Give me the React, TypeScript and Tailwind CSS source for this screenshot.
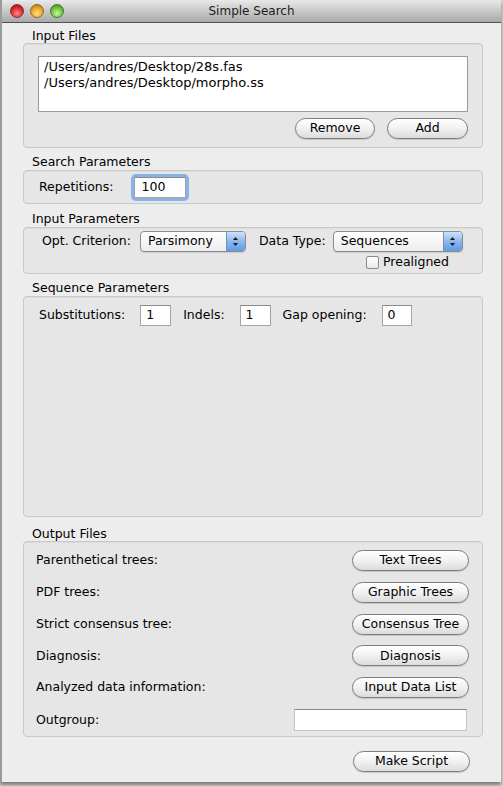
import React from "react";

const FONT = { fontFamily: '"DejaVu Sans", "Liberation Sans", sans-serif' };

function AquaButton({ label, className }: { label: string; className: string }) {
  return (
    <button
      type="button"
      className={`flex h-[21px] items-center justify-center rounded-full border border-[#7d7d7d] bg-gradient-to-b from-[#ffffff] via-[#f1f1f1] to-[#dcdcdc] text-[12.5px] text-black shadow-[0_1px_1px_rgba(0,0,0,0.15)] ${className}`}
    >
      {label}
    </button>
  );
}

function PopUp({ value, className }: { value: string; className: string }) {
  return (
    <div
      className={`flex h-[21px] items-stretch overflow-hidden rounded-[4px] border border-[#8c8c8c] bg-gradient-to-b from-white to-[#ececec] shadow-[0_1px_1px_rgba(0,0,0,0.12)] ${className}`}
    >
      <span className="flex flex-1 items-center pl-[7px] text-black">{value}</span>
      <span className="flex w-[19px] items-center justify-center border-l border-[#6f8fbf] bg-gradient-to-b from-[#cfe2fb] via-[#8cb6ee] to-[#5e9ae8]">
        <svg width="7" height="11" viewBox="0 0 7 11">
          <path d="M3.5 1 L6 4 L1 4 Z" fill="#1a1a1a" />
          <path d="M3.5 10 L6 7 L1 7 Z" fill="#1a1a1a" />
        </svg>
      </span>
    </div>
  );
}

function Field({ value, className }: { value: string; className: string }) {
  return (
    <div
      className={`flex h-[21px] items-center border border-[#a5a5a5] border-t-[#8a8a8a] bg-white pl-[5px] text-black ${className}`}
    >
      {value}
    </div>
  );
}

// section caption above a grouped box
function GroupLabel({ text, className }: { text: string; className?: string }) {
  return <div className={`ml-[9px] h-[14px] pt-[1px] leading-[14px] text-black ${className ?? ""}`}>{text}</div>;
}

function Group({ children, className }: { children: React.ReactNode; className: string }) {
  return (
    <div className={`rounded-[4px] border border-[#c9c9c9] bg-[#e6e6e6] shadow-[inset_0_1px_0_rgba(0,0,0,0.04)] ${className}`}>
      {children}
    </div>
  );
}

const outputs = [
  ["Parenthetical trees:", "Text Trees"],
  ["PDF trees:", "Graphic Trees"],
  ["Strict consensus tree:", "Consensus Tree"],
  ["Diagnosis:", "Diagnosis"],
  ["Analyzed data information:", "Input Data List"],
];

export default function App() {
  return (
    <div className="h-[786px] w-[503px] bg-[#d8d8d8] text-[12.5px]" style={FONT}>
      <div className="flex h-[782px] w-[501px] flex-col border-l-2 border-[#9a9a9a] bg-[#ededed] shadow-[0_3px_4px_rgba(0,0,0,0.45)]">
        {/* title bar */}
        <div className="relative flex h-[23px] shrink-0 items-center justify-center border-b border-[#515151] bg-gradient-to-b from-[#e9e9e9] to-[#a9a9a9]">
          <div className="absolute left-[8px] top-[4px] flex gap-[6px]">
            <span className="h-[14px] w-[14px] rounded-full border border-[#8a2a2a] bg-[radial-gradient(circle_at_50%_70%,#ff8a8a,#d62b2b_55%,#8e1212)]" />
            <span className="h-[14px] w-[14px] rounded-full border border-[#9a6a12] bg-[radial-gradient(circle_at_50%_70%,#ffe08a,#e8a526_55%,#a66a08)]" />
            <span className="h-[14px] w-[14px] rounded-full border border-[#3f7a24] bg-[radial-gradient(circle_at_50%_70%,#c8f59a,#6fc23f_55%,#2f7a14)]" />
          </div>
          <span className="text-[12px] text-[#1c1c1c]">Simple Search</span>
        </div>

        <div className="flex flex-col pl-[21px] pr-[18px]">
          {/* Input Files */}
          <GroupLabel text="Input Files" className="mt-[5px]" />
          <Group className="mt-[1px] h-[105px] px-[14px] pt-[12px]">
            <div className="h-[56px] border border-[#9b9b9b] bg-white px-[5px] pt-[2px] text-[13px] leading-[16px] text-black">
              <div>/Users/andres/Desktop/28s.fas</div>
              <div>/Users/andres/Desktop/morpho.ss</div>
            </div>
            <div className="mt-[6px] flex justify-end gap-[12px]">
              <AquaButton label="Remove" className="w-[80px]" />
              <AquaButton label="Add" className="w-[81px]" />
            </div>
          </Group>

          {/* Search Parameters */}
          <GroupLabel text="Search Parameters" className="mt-[6px]" />
          <Group className="mt-[2px] flex h-[34px] items-center pl-[15px]">
            <span className="text-black">Repetitions:</span>
            <div className="ml-[21px] rounded-[2px] shadow-[0_0_0_3px_rgba(105,160,230,0.75)]">
              <Field value="100" className="w-[52px] pl-[6px]" />
            </div>
          </Group>

          {/* Input Parameters */}
          <GroupLabel text="Input Parameters" className="mt-[7px]" />
          <Group className="mt-[2px] h-[47px] pl-[18px] pt-[3px]">
            <div className="flex items-center">
              <span className="text-black">Opt. Criterion:</span>
              <PopUp value="Parsimony" className="ml-[9px] w-[106px]" />
              <span className="ml-[13px] text-black">Data Type:</span>
              <PopUp value="Sequences" className="ml-[7px] w-[130px]" />
            </div>
            <div className="mt-[3px] flex items-center justify-end pr-[33px]">
              <span className="h-[13px] w-[13px] rounded-[2px] border border-[#8a8a8a] bg-gradient-to-b from-white to-[#e8e8e8]" />
              <span className="ml-[4px] leading-[14px] text-black">Prealigned</span>
            </div>
          </Group>

          {/* Sequence Parameters */}
          <GroupLabel text="Sequence Parameters" className="mt-[6px]" />
          <Group className="mt-[2px] h-[221px] pl-[15px] pt-[8px]">
            <div className="flex items-center">
              <span className="text-black">Substitutions:</span>
              <Field value="1" className="ml-[15px] w-[31px]" />
              <span className="ml-[12px] text-black">Indels:</span>
              <Field value="1" className="ml-[15px] w-[31px]" />
              <span className="ml-[12px] text-black">Gap opening:</span>
              <Field value="0" className="ml-[15px] w-[30px]" />
            </div>
          </Group>

          {/* Output Files */}
          <GroupLabel text="Output Files" className="mt-[9px]" />
          <Group className="mt-[1px] flex h-[196px] flex-col gap-[10.8px] pl-[12px] pr-[13px] pt-[8px]">
            {outputs.map(([label, btn]) => (
              <div key={btn} className="flex items-center justify-between">
                <span className="text-black">{label}</span>
                <AquaButton label={btn} className="w-[117px]" />
              </div>
            ))}
            <div className="flex items-center justify-between">
              <span className="text-black">Outgroup:</span>
              <Field value="" className="mr-[2px] h-[22px] w-[173px] border-[#c4c4c4]" />
            </div>
          </Group>

          <div className="mt-[14px] flex justify-end pr-[13px]">
            <AquaButton label="Make Script" className="w-[117px]" />
          </div>
        </div>
      </div>
    </div>
  );
}
